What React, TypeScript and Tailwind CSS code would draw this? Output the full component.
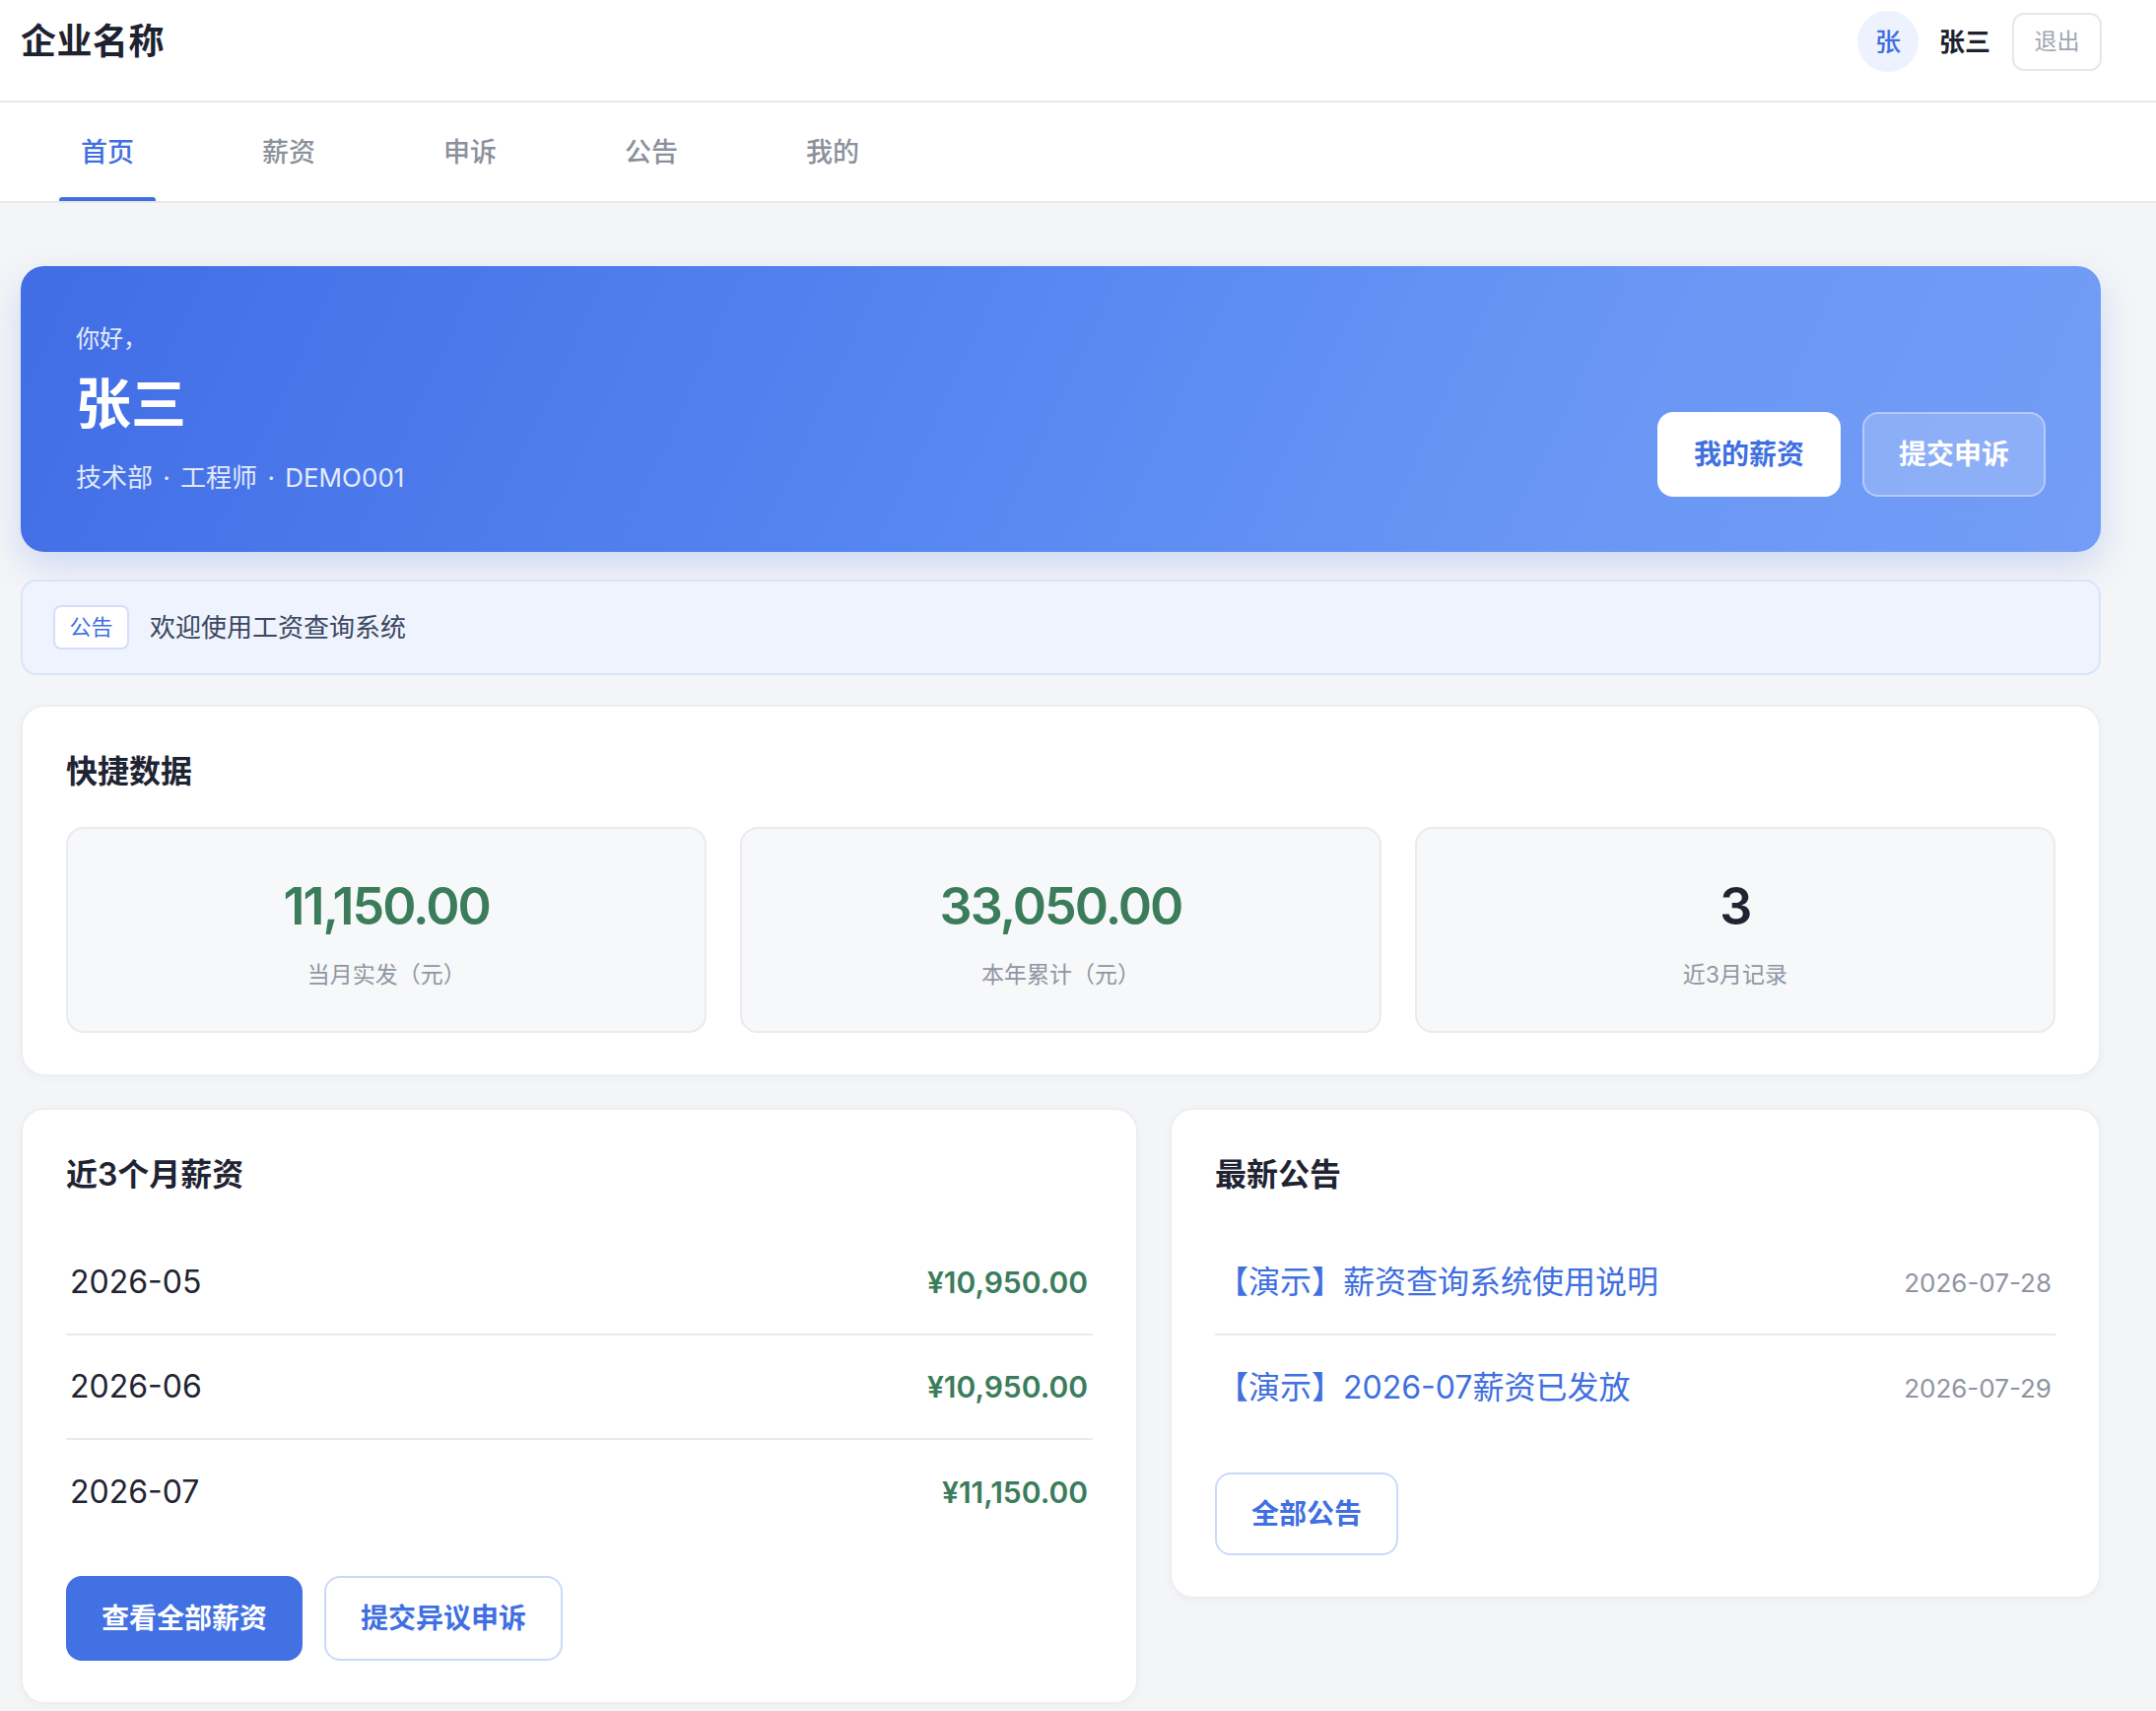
import React, { useState } from 'react';

type SalaryRow = { month: string; amount: string };
type Notice = { title: string; date: string };

const tabs = ['首页', '薪资', '申诉', '公告', '我的'];

const stats = [
  { value: '11,150.00', label: '当月实发（元）', money: true },
  { value: '33,050.00', label: '本年累计（元）', money: true },
  { value: '3', label: '近3月记录', money: false },
];

const salaries: SalaryRow[] = [
  { month: '2026-05', amount: '¥10,950.00' },
  { month: '2026-06', amount: '¥10,950.00' },
  { month: '2026-07', amount: '¥11,150.00' },
];

const notices: Notice[] = [
  { title: '【演示】薪资查询系统使用说明', date: '2026-07-28' },
  { title: '【演示】2026-07薪资已发放', date: '2026-07-29' },
];

const Card: React.FC<{ title: string; children: React.ReactNode }> = ({ title, children }) => (
  <section className="rounded-[24px] border-2 border-[#eceef2] bg-white px-[44px] pt-[42px] pb-[42px] shadow-[0_2px_10px_rgba(15,23,42,0.03)]">
    <h2 className="text-[32px] font-semibold leading-[48px] text-[#1f2433]">{title}</h2>
    {children}
  </section>
);

const App: React.FC = () => {
  const [active, setActive] = useState(0);

  return (
    <div className="min-h-screen bg-[#f4f5f7] font-[family-name:Inter,'Noto_Sans_CJK_SC',sans-serif] text-[#1f2433]">
      {/* Header */}
      <header className="flex h-[104px] items-center justify-between border-b-2 border-[#e6e8ec] bg-white pb-[18px] pl-[21px] pr-[55px]">
        <h1 className="text-[36px] font-bold tracking-[0.5px] text-[#1d2230]">企业名称</h1>
        <div className="flex items-center">
          <div className="flex h-[62px] w-[62px] items-center justify-center rounded-full bg-[#edf2fe] text-[26px] font-medium text-[#3f6fe0]">
            张
          </div>
          <span className="ml-[21px] text-[26px] font-semibold text-[#1d2230]">张三</span>
          <button className="ml-[22px] h-[59px] w-[91px] rounded-[12px] border-2 border-[#e5e7eb] bg-white text-[23px] text-[#a1a6b1]">
            退出
          </button>
        </div>
      </header>

      {/* Tabs */}
      <nav className="flex h-[102px] gap-[86px] border-b-2 border-[#e6e8ec] bg-white pl-[60px]">
        {tabs.map((t, i) => (
          <button
            key={t}
            onClick={() => setActive(i)}
            className={`relative h-full w-[98px] pt-[2px] text-center text-[27px] font-medium ${
              i === active ? 'text-[#3f6fe0]' : 'text-[#8b909b]'
            }`}
          >
            {t}
            {i === active && (
              <span className="absolute bottom-0 left-0 h-[4px] w-full rounded-t-[3px] bg-[#3f6fe0]" />
            )}
          </button>
        ))}
      </nav>

      <main className="pb-[8px] pl-[21px] pr-[56px] pt-[64px]">
        {/* Welcome banner */}
        <section className="flex h-[290px] items-end justify-between rounded-[24px] bg-[linear-gradient(115deg,#416de5_0%,#5686f1_45%,#6a97f5_75%,#739df6_100%)] p-[56px] shadow-[0_14px_36px_rgba(66,112,229,0.22)]">
          <div className="text-white">
            <p className="mt-[3px] text-[24px] leading-[36px] text-white/85">你好，</p>
            <p className="mt-[13px] text-[56px] font-bold leading-[70px]">张三</p>
            <p className="mt-[20px] text-[26px] leading-[39px] text-white/85 [word-spacing:3px]">
              技术部 · 工程师 · DEMO001
            </p>
          </div>
          <div className="flex gap-[22px]">
            <button className="h-[86px] rounded-[16px] bg-white px-[37px] text-[28px] font-semibold text-[#3f6fe0]">
              我的薪资
            </button>
            <button className="h-[86px] rounded-[16px] border-2 border-white/35 bg-white/20 px-[35px] text-[28px] font-semibold text-white">
              提交申诉
            </button>
          </div>
        </section>

        {/* Notice bar */}
        <div className="mt-[28px] flex h-[97px] items-center gap-[21px] rounded-[16px] border-2 border-[#d9e4fb] bg-[#eef3fd] px-[31px]">
          <span className="flex h-[45px] w-[77px] items-center justify-center rounded-[8px] border-2 border-[#d3dffa] bg-white text-[22px] text-[#3f6fe0]">
            公告
          </span>
          <span className="text-[26px] text-[#3b4660]">欢迎使用工资查询系统</span>
        </div>

        {/* Quick data */}
        <div className="mt-[30px]">
          <Card title="快捷数据">
            <div className="mt-[32px] grid grid-cols-3 gap-[34px]">
              {stats.map((s) => (
                <div
                  key={s.label}
                  className="flex h-[209px] flex-col items-center rounded-[18px] border-2 border-[#e9ebef] bg-[#f7f8fa] pt-[52px]"
                >
                  <span
                    className={`text-[52px] font-semibold leading-[54px] tracking-[-2px] ${
                      s.money ? 'text-[#3b7d5b]' : 'text-[#1f2433]'
                    }`}
                  >
                    {s.value}
                  </span>
                  <span className="mt-[26px] text-[23px] leading-[32px] text-[#9096a2]">{s.label}</span>
                </div>
              ))}
            </div>
          </Card>
        </div>

        {/* Bottom cards */}
        <div className="mt-[32px] grid grid-cols-[6fr_5fr] items-start gap-[32px]">
          <Card title="近3个月薪资">
            <div className="mt-[33px]">
              {salaries.map((r, i) => (
                <div
                  key={r.month}
                  className={`flex h-[106px] items-center justify-between pl-[4px] pr-[5px] ${
                    i < salaries.length - 1 ? 'border-b-2 border-[#e9ebef]' : ''
                  }`}
                >
                  <span className="text-[32px] text-[#1f2433]">{r.month}</span>
                  <span className="text-[30px] font-semibold text-[#3b7d5b]">{r.amount}</span>
                </div>
              ))}
            </div>
            <div className="mt-[32px] flex gap-[22px]">
              <button className="h-[86px] rounded-[16px] border-2 border-[#4271e4] bg-[#4271e4] px-[34px] text-[28px] font-semibold text-white">
                查看全部薪资
              </button>
              <button className="h-[86px] rounded-[16px] border-2 border-[#cbd9fa] bg-white px-[35px] text-[28px] font-semibold text-[#3f6fe0]">
                提交异议申诉
              </button>
            </div>
          </Card>

          <Card title="最新公告">
            <div className="mt-[33px]">
              {notices.map((n, i) => (
                <div
                  key={n.date}
                  className={`flex h-[106px] items-center justify-between pl-[2px] pr-[4px] ${
                    i < notices.length - 1 ? 'border-b-2 border-[#e9ebef]' : ''
                  }`}
                >
                  <span className="text-[32px] text-[#3f6fe0]">{n.title}</span>
                  <span className="text-[26px] text-[#8f949f]">{n.date}</span>
                </div>
              ))}
            </div>
            <button className="mt-[33px] h-[84px] rounded-[16px] border-2 border-[#cbd9fa] bg-white px-[35px] text-[28px] font-semibold text-[#3f6fe0]">
              全部公告
            </button>
          </Card>
        </div>
      </main>
    </div>
  );
};

export default App;
